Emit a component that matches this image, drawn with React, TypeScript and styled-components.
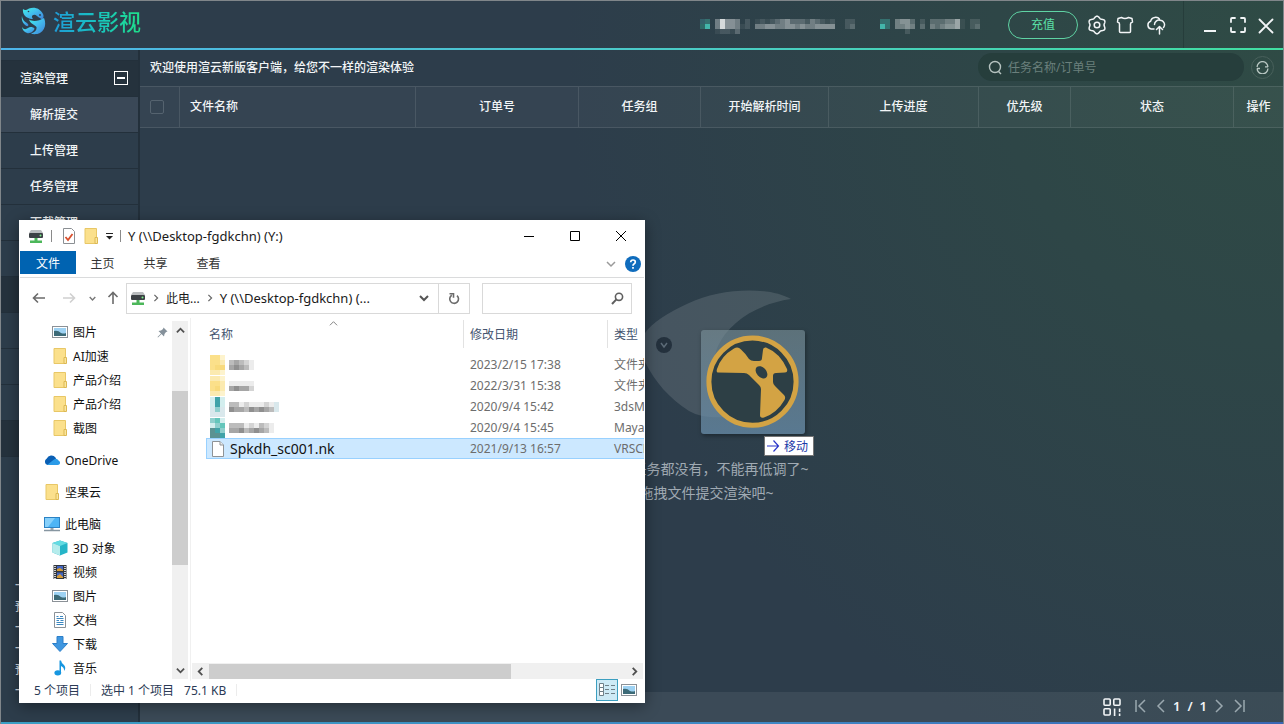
import React from 'react';
import styled, { createGlobalStyle, css } from 'styled-components';

const GlobalStyle = createGlobalStyle`
  *, *::before, *::after { box-sizing: border-box; }
  body { margin: 0; background: #2d3d4b; }
  body, button, input, table {
    font-family: "Noto Sans", "Noto Sans CJK SC", sans-serif;
    font-size: 12px;
  }
  button {
    padding: 0;
    border: 0;
    background: none;
    color: inherit;
    display: flex;
    align-items: center;
    justify-content: center;
  }
  svg { display: block; flex: none; }
`;

/* ---------- Render client ---------- */

const Client = styled.div`
  position: relative;
  min-height: 100vh;
  display: flex;
  flex-direction: column;
  overflow: hidden;
  border: 1px solid #80868a;
  border-bottom: 0;
  color: #f2f5f7;
  font-weight: 500;
  background:
    radial-gradient(ellipse 56% 105% at 100% 5%, #2f4b45 0%, #2e4647 40%, rgba(45, 61, 75, 0) 100%),
    #2d3d4b;
`;

const Header = styled.header`
  display: flex;
  align-items: center;
  height: 47px;
  padding: 0 7px 0 20px;
`;

const Brand = styled.div`
  display: flex;
  align-items: center;
  gap: 7px;
  margin-bottom: 8px;
`;

const BrandName = styled.span`
  font-size: 22px;
  line-height: 32px;
  font-weight: 500;
  color: transparent;
  background: linear-gradient(90deg, #1f9bd8, #18c3c0 50%, #1fe08a);
  background-clip: text;
`;

const Account = styled.div`
  display: flex;
  gap: 25px;
  margin: 4px 28px 0 auto;
`;

const Recharge = styled.button`
  width: 70px;
  height: 28px;
  margin-right: 9px;
  padding-bottom: 1px;
  border: 1px solid #5fd3a4;
  border-radius: 14px;
  color: #5be0a8;
`;

const IconButton = styled.button<{ $gap?: number }>`
  width: 20px;
  height: 20px;
  margin-right: ${(p) => p.$gap ?? 8}px;
`;

const WindowControls = styled.div`
  display: flex;
  align-items: center;
  gap: 8px;
  align-self: stretch;
  padding-left: 16px;
  border-left: 1px solid #263d3b;
  button { width: 20px; height: 20px; }
`;

const AccentLine = styled.div<{ $bottom?: boolean }>`
  height: 2px;
  flex: none;
  background: ${(p) =>
    p.$bottom
      ? 'linear-gradient(90deg, #3b9fc4, #3f87c4 60%, #3a66b4)'
      : 'linear-gradient(90deg, #4db5ea, #4bcac8 50%, #41dfa2)'};
`;

const Workspace = styled.div`
  flex: 1;
  display: flex;
`;

const Sidebar = styled.nav`
  flex: none;
  display: flex;
  flex-direction: column;
  width: 139px;
  padding-top: 10px;
  border-right: 2px solid #23303b;
`;

const navRow = css`
  display: flex;
  align-items: center;
  height: 36px;
  padding-bottom: 2px;
  border-top: 1px solid #23303b;
`;

const NavGroup = styled.div`
  ${navRow}
  justify-content: space-between;
  padding: 0 10px 1px 19px;
  background: #25323d;
`;

const NavItem = styled.a<{ $active?: boolean }>`
  ${navRow}
  padding-left: 29px;
  color: inherit;
  text-decoration: none;
  background: ${(p) => (p.$active ? '#3a4857' : 'transparent')};
`;

const Stats = styled.div`
  margin-top: auto;
  padding: 0 0 21px 14px;
  line-height: 21px;
  color: #d5dce2;
`;

const Main = styled.main`
  flex: 1;
  min-width: 0;
  display: flex;
  flex-direction: column;
`;

const Toolbar = styled.div`
  display: flex;
  align-items: center;
  justify-content: space-between;
  height: 36px;
  padding: 0 9px 2px 10px;
`;

const Tools = styled.div`
  display: flex;
  align-items: center;
  gap: 7px;
`;

const SearchBox = styled.label`
  display: flex;
  align-items: center;
  gap: 5px;
  width: 266px;
  height: 28px;
  padding-left: 10px;
  border-radius: 14px;
  background: #263e3c;
  input {
    flex: 1;
    min-width: 0;
    padding: 0;
    border: 0;
    outline: 0;
    background: none;
    color: #dfe8e5;
  }
  input::placeholder { color: #6b807c; opacity: 1; }
`;

const RefreshButton = styled.button`
  width: 23px;
  height: 23px;
  border: 1px solid #48605b;
  border-radius: 50%;
`;

const TaskTable = styled.table`
  width: 100%;
  table-layout: fixed;
  border-spacing: 0;
  th {
    height: 42px;
    padding: 0 0 2px;
    font-weight: 500;
    background: rgba(255, 255, 255, 0.04);
    border: solid rgba(255, 255, 255, 0.1);
    border-width: 1px 1px 1px 0;
  }
  th:last-child { border-right: 0; }
  th:nth-child(2) { text-align: left; padding-left: 10px; }
`;

const CheckBox = styled.input`
  appearance: none;
  display: block;
  width: 14px;
  height: 14px;
  margin: 2px 0 0 10px;
  border: 1px solid #55636f;
  border-radius: 2px;
`;

const Empty = styled.div`
  flex: 1;
  display: flex;
  flex-direction: column;
  align-items: center;
  padding: 162px 10px 0 0;
  color: #a0aab3;
  font-size: 14px;
  line-height: 24px;
  font-weight: 400;
  p { margin: 0; }
`;

const Footer = styled.footer`
  display: flex;
  align-items: center;
  justify-content: flex-end;
  height: 30px;
  padding-right: 38px;
  background: rgba(255, 255, 255, 0.07);
  button { height: 18px; }
`;

const Pager = styled.div`
  display: flex;
  align-items: center;
  gap: 7px;
  margin: 0 0 2px 14px;
`;

const PageCount = styled.div`
  display: flex;
  justify-content: space-between;
  width: 34px;
  font-size: 13px;
  font-weight: 600;
  line-height: 18px;
`;

/* ---------- File explorer window ---------- */

const Explorer = styled.section`
  position: absolute;
  left: 18px;
  top: 219px;
  width: 626px;
  height: 483px;
  display: flex;
  flex-direction: column;
  padding: 0 1px;
  background: #fff;
  color: #1a1a1a;
  font-weight: 400;
  box-shadow: 0 3px 14px rgba(0, 0, 0, 0.4);
`;

const TitleBar = styled.div`
  display: flex;
  align-items: center;
  height: 31px;
  padding-left: 8px;
`;

const WindowTitle = styled.span`
  font-size: 13px;
`;

const QuickAccess = styled.div`
  display: flex;
  align-items: center;
  gap: 7px;
  margin-right: 7px;
`;

const QuickActions = styled.div`
  display: flex;
  align-items: center;
  gap: 7px;
  padding-left: 3px;
`;

const Divider = styled.i<{ $color?: string }>`
  width: 1px;
  height: 12px;
  background: ${(p) => p.$color ?? '#8a8a8a'};
`;

const Caption = styled.div`
  display: flex;
  margin-left: auto;
  button { width: 46px; height: 30px; }
`;

const Ribbon = styled.div`
  display: flex;
  align-items: flex-start;
  height: 27px;
  border-bottom: 1px solid #dadbdc;
`;

const RibbonTab = styled.button<{ $primary?: boolean }>`
  width: ${(p) => (p.$primary ? 56 : 53)}px;
  height: 23px;
  color: ${(p) => (p.$primary ? '#fff' : '#333')};
  background: ${(p) => (p.$primary ? '#0063b1' : 'transparent')};
`;

const RibbonEnd = styled.div`
  display: flex;
  align-items: center;
  gap: 9px;
  height: 25px;
  margin-left: auto;
  padding-right: 3px;
`;

const AddressRow = styled.div`
  display: flex;
  align-items: center;
  height: 40px;
  padding: 0 12px 0 4px;
`;

const NavButton = styled.button<{ $width: number }>`
  width: ${(p) => p.$width}px;
  height: 30px;
`;

const AddressBox = styled.div`
  flex: 1;
  display: flex;
  align-items: center;
  gap: 6px;
  height: 31px;
  padding-left: 3px;
  border: 1px solid #d9d9d9;
  white-space: nowrap;
`;

const Crumb = styled.span<{ $large?: boolean }>`
  font-size: ${(p) => (p.$large ? 13 : 12)}px;
`;

const AddressRefresh = styled.button`
  align-self: stretch;
  width: 31px;
  border-left: 1px solid #d9d9d9;
`;

const AddressDrop = styled.button`
  width: 16px;
  height: 29px;
  margin-left: auto;
`;

const ExplorerSearch = styled.label`
  display: flex;
  align-items: center;
  width: 150px;
  height: 31px;
  margin-left: 12px;
  padding: 0 7px;
  border: 1px solid #d9d9d9;
  input { flex: 1; min-width: 0; border: 0; outline: 0; }
`;

const Panes = styled.div`
  flex: 1;
  min-height: 0;
  display: flex;
`;

const Tree = styled.ul`
  width: 152px;
  margin: 2px 0 0;
  padding: 0;
  list-style: none;
`;

const TreeItem = styled.li<{ $root?: boolean; $spaced?: boolean }>`
  display: flex;
  align-items: center;
  gap: 5px;
  height: 24px;
  margin-top: ${(p) => (p.$spaced ? 8 : 0)}px;
  padding: 0 4px 0 ${(p) => (p.$root ? 24 : 32)}px;
  color: #111;
  > span { flex: 1; }
`;

const VScroll = styled.div`
  display: flex;
  flex-direction: column;
  align-items: center;
  width: 16px;
  margin: 3px 2px 2px 0;
  background: #f0f0f0;
  button { width: 16px; height: 18px; }
`;

const VThumb = styled.div`
  width: 16px;
  height: 174px;
  margin: 52px 0 auto;
  background: #cdcdcd;
`;

const FilePane = styled.div`
  flex: 1;
  min-width: 0;
  display: flex;
  flex-direction: column;
  border-left: 1px solid #f0f0f0;
`;

const FileScroll = styled.div`
  flex: 1;
  overflow: hidden;
  padding-left: 15px;
`;

const FileTable = styled.table`
  width: 540px;
  table-layout: fixed;
  border-spacing: 0;
  th {
    position: relative;
    height: 31px;
    padding: 1px 0 0 6px;
    text-align: left;
    font-weight: 400;
    color: #44546f;
    background: linear-gradient(#e2e2e2, #e2e2e2) right 0 top 2px / 1px 28px no-repeat;
  }
  th:first-child { padding-left: 3px; }
  tbody::before { content: ""; display: block; height: 5px; }
`;

const SortMark = styled.span`
  position: absolute;
  left: 123px;
  top: 1px;
`;

const FileRow = styled.tr<{ $selected?: boolean }>`
  td {
    height: 21px;
    padding: 0 0 0 6px;
    line-height: 19px;
    white-space: nowrap;
    color: #6d6d6d;
    border: solid ${(p) => (p.$selected ? '#99d1ff' : 'transparent')};
    border-width: 1px 0;
    background: ${(p) => (p.$selected ? '#cce8ff' : 'transparent')};
  }
  td:first-child {
    padding-left: 3px;
    border-left-width: 1px;
    color: #111;
    font-size: 14px;
  }
`;

const FileName = styled.div`
  display: flex;
  align-items: center;
  gap: 4px;
  height: 19px;
`;

const HScroll = styled.div`
  display: flex;
  align-items: center;
  height: 16px;
  margin: 0 1px 2px;
  background: #f0f0f0;
  button { width: 17px; height: 16px; }
`;

const HThumb = styled.div`
  width: 302px;
  height: 15px;
  margin-right: auto;
  background: #cdcdcd;
`;

const StatusBar = styled.div`
  display: flex;
  align-items: center;
  height: 22px;
  padding: 0 4px 4px 14px;
  color: #2b3a55;
`;

const StatusText = styled.div`
  display: flex;
  align-items: center;
  gap: 10px;
`;

const Views = styled.div`
  display: flex;
  align-items: center;
  margin-left: auto;
`;

const ViewButton = styled.button<{ $on?: boolean }>`
  width: 22px;
  height: 22px;
  border: 1px solid ${(p) => (p.$on ? '#3d9fc0' : 'transparent')};
  background: ${(p) => (p.$on ? '#cdeaf6' : 'transparent')};
`;

/* ---------- Drag feedback ---------- */

const DragGhost = styled.div`
  position: absolute;
  left: 700px;
  top: 329px;
  width: 104px;
  height: 104px;
  border-radius: 3px;
  background: linear-gradient(rgba(124, 146, 154, 0.6), rgba(104, 140, 168, 0.75));
  box-shadow: 1px 2px 4px rgba(0, 0, 0, 0.35);
`;

const DropHint = styled.div`
  position: absolute;
  left: 763px;
  top: 435px;
  display: flex;
  align-items: center;
  gap: 4px;
  height: 20px;
  padding: 0 5px 0 1px;
  border: 1px solid #767676;
  background: #fff;
  color: #1b3aa8;
  font-weight: 400;
`;

/* ---------- Drawings ---------- */

const palette: Record<string, string> = {
  a: '#35706f', b: '#2f6a68', c: '#43b5aa', d: '#34606a',
  1: 'rgba(255,255,255,.06)', 2: 'rgba(255,255,255,.12)', 3: 'rgba(255,255,255,.22)',
  4: 'rgba(255,255,255,.32)', 5: 'rgba(255,255,255,.42)', 6: 'rgba(255,255,255,.52)',
  7: 'rgba(255,255,255,.64)', 8: 'rgba(255,255,255,.8)',
  y: '#fbe08a', Y: '#f8da7c', w: '#fdf3cd', W: '#fbeab0',
  t: '#40a3a8', T: '#5b9292', s: '#d3eeee', S: '#8fcfcd', u: '#63c6bb', v: '#7db3b3',
  k: '#8f8f8f', l: '#a6a6a6', m: '#bcbcbc', n: '#d4d4d4', o: '#ececec', p: '#d9e8ec',
};

function Mosaic({ rows }: { rows: string[] }) {
  const w = Math.max(...rows.map((r) => r.length)) * 5;
  const h = rows.length * 5;
  return (
    <svg width={w} height={h} shapeRendering="crispEdges" aria-hidden="true">
      {rows.flatMap((row, y) =>
        [...row].map((c, x) =>
          palette[c] ? (
            <rect key={`${x}-${y}`} x={x * 5} y={y * 5} width="5" height="5" fill={palette[c]} />
          ) : null,
        ),
      )}
    </svg>
  );
}

const line = { fill: 'none', stroke: 'currentColor', strokeWidth: 1.5, strokeLinecap: 'round', strokeLinejoin: 'round' } as const;

const Logo = () => (
  <svg width="25" height="28" viewBox="0 0 25 28">
    <defs>
      <linearGradient id="logo" x1="0" y1="0" x2="1" y2="1">
        <stop offset="0" stopColor="#3ff0e4" />
        <stop offset=".45" stopColor="#42bfee" />
        <stop offset="1" stopColor="#3f7fd6" />
      </linearGradient>
    </defs>
    <g fill="url(#logo)">
      <path d="M2 2C4 4 5 3 8 1.500C13-.5 19 1 22 7C23 9 22.500 11 21 13C20 11 18 11 16 9C13 6 9 9 12 12C7 12 1 9 2 2Z" />
      <path d="M23 11C25.500 17 24 23 19 26C16 27.500 12 27.500 10 26.500C14 25 16 23 15.500 20C13 17.500 9 16.500 8 12.500C12 15 18 14 23 11Z" />
      <path d="M1 20C3 23 5 22.500 7 21C9 19.500 12 20 13.500 21.500C13 24.500 9 27 6 26C3 25 1.500 23 1 20Z" />
      <path d="M1 9C1.500 14 5 15 7 17C8 18.500 7 19.500 5.500 19C2.500 17.500 0 13 1 9Z" />
    </g>
    <circle cx="19" cy="8" r=".9" fill="#2d3d4b" />
    <circle cx="7.500" cy="4.500" r=".8" fill="#2d3d4b" />
  </svg>
);

/* Six-lobed outline whose radius follows a cosine. */
const gearOutline = Array.from({ length: 72 }, (_, i) => {
  const a = (i * Math.PI) / 36;
  const r = 7.9 - 0.9 * Math.cos(6 * a);
  return `${(10 + r * Math.cos(a)).toFixed(2)},${(10 + r * Math.sin(a)).toFixed(2)}`;
}).join(' ');

const Gear = () => (
  <svg width="20" height="20" viewBox="0 0 20 20" {...line}>
    <polygon points={gearOutline} />
    <circle cx="10" cy="10" r="2.800" />
  </svg>
);

const Shirt = () => (
  <svg width="20" height="20" viewBox="0 0 20 20" {...line}>
    <path d="M6.500 2.500Q10 4.500 13.500 2.500L17 3.500L17.500 7Q15.500 7.500 15.500 9V16.500Q15.500 17.500 14.500 17.500H5.500Q4.500 17.500 4.500 16.500V9Q4.500 7.500 2.500 7L3 3.500Z" />
  </svg>
);

const CloudUp = () => (
  <svg width="20" height="20" viewBox="0 0 20 20" {...line}>
    <path d="M8 14H5.200A4 4 0 0 1 4.600 6.300A5 5 0 0 1 14 5.200A4.500 4.500 0 0 1 17.500 12.500M8.500 9.500A4.500 4.500 0 0 1 14 5.200M13.500 19V12M10.500 14.500L13.500 11.500L16.500 14.500" />
  </svg>
);

const Minus = () => (
  <svg width="20" height="20" viewBox="0 0 20 20"><path d="M4 16H16" stroke="#f2f5f7" strokeWidth="2" /></svg>
);

const Corners = () => (
  <svg width="20" height="20" viewBox="0 0 20 20" {...line} strokeWidth={1.800}>
    <path d="M3 7V4Q3 3 4 3H7M13 3H16Q17 3 17 4V7M17 13V16Q17 17 16 17H13M7 17H4Q3 17 3 16V13" />
  </svg>
);

const Cross = () => (
  <svg width="20" height="20" viewBox="0 0 20 20" {...line} strokeWidth={1.800}>
    <path d="M3.500 4.500L16.500 17.500M16.500 4.500L3.500 17.500" />
  </svg>
);

const Chevron = ({ dir, size = 10, color = 'currentColor', width = 1.5 }: { dir: 'up' | 'down' | 'left' | 'right'; size?: number; color?: string; width?: number }) => {
  const d = {
    up: 'M1 7L5 3L9 7',
    down: 'M1 3L5 7L9 3',
    left: 'M7 1L3 5L7 9',
    right: 'M3 1L7 5L3 9',
  }[dir];
  return (
    <svg width={size} height={size} viewBox="0 0 10 10" fill="none" stroke={color} strokeWidth={width}>
      <path d={d} />
    </svg>
  );
};

const PageArrow = ({ dir, end }: { dir: 'left' | 'right'; end?: boolean }) => (
  <svg width="12" height="14" viewBox="0 0 12 14" fill="none" stroke="#9aa8af" strokeWidth="1.5">
    <path d={dir === 'left' ? 'M10 1L4 7L10 13' : 'M2 1L8 7L2 13'} />
    {end && <path d={dir === 'left' ? 'M1 1V13' : 'M11 1V13'} />}
  </svg>
);

const Blocks = () => (
  <svg width="18" height="18" viewBox="0 0 18 18" fill="none" stroke="#f2f5f7" strokeWidth="1.600">
    <rect x="1" y="1" width="6.200" height="6.200" rx="1" />
    <rect x="10.800" y="1" width="6.200" height="6.200" rx="1" />
    <rect x="1" y="10.800" width="6.200" height="6.200" rx="1" />
    <path d="M11.600 10.500V18M16.600 10.500V14M16.600 15.500V18" />
  </svg>
);

const Lens = () => (
  <svg width="15" height="15" viewBox="0 0 15 15" fill="none" stroke="#b6c3c0" strokeWidth="1.400">
    <circle cx="7" cy="7" r="5.500" />
    <path d="M10.500 11.500L13 14" />
  </svg>
);

const Sync = () => (
  <svg width="13" height="13" viewBox="0 0 13 13" fill="none" stroke="#b9c7c3" strokeWidth="1.300">
    <path d="M1.100 6A5.400 5.400 0 0 1 11.900 6M11.900 7.500A5.400 5.400 0 0 1 1.100 7.500M9 5.800H12M4 7.500H1" />
  </svg>
);

const Collapse = () => (
  <svg width="14" height="14" viewBox="0 0 14 14" fill="none" stroke="#fff">
    <rect x=".5" y=".5" width="13" height="13" />
    <path d="M3 7H11" strokeWidth="2" />
  </svg>
);

const Whale = () => (
  <svg width="200" height="167" viewBox="0 0 200 167">
    <path d="M184 9C162-4 112-2 82 13C60 23 45 33 38 43C30 52 30 60 38 72C48 92 62 108 82 121C92 127 106 128 122 127C106 104 103 74 111 56C122 32 150 14 184 9Z" fill="#fff" opacity=".12" />
    <circle cx="57" cy="55" r="8" fill="#24313d" />
    <path d="M54 53L57 57L60 53" fill="none" stroke="#5c6b78" strokeWidth="1.500" />
  </svg>
);

const Nuke = () => (
  <svg width="104" height="104" viewBox="0 0 104 104">
    <circle cx="51.500" cy="51.700" r="43.600" fill="#2d3f45" stroke="#d3a344" strokeWidth="5" />
    <path d="M17 42.500Q15 42.500 16 39Q20 26 33 18.500Q37 16 40 19.500Q44 23 48 29Q50 31 53 31H58Q61 31 61 28L62 20Q62 17 65 17.500Q79 23 86 39Q87 42.500 84 42.500L75 43Q72 43 72 46V52Q72 54 74 56L83 65Q85 67 83.500 70Q76 83 63 87.500Q59 88.500 59 85L60 59Q60 57 58 55L48 45Q46 43 43 43Z" fill="#d3a344" />
    <ellipse cx="60.500" cy="42.300" rx="4.800" ry="7" transform="rotate(-42 60.500 42.300)" fill="#2d3f45" />
  </svg>
);

const Folder = () => (
  <svg width="16" height="16" viewBox="0 0 16 16">
    <path d="M2 .5H13.500V15.500H2Z" fill="#fbe08c" stroke="#e8c766" />
    <path d="M12 9.500H14.500V15.500H12Z" fill="#fbe59b" stroke="#dcb955" />
  </svg>
);

const Drive = () => (
  <svg width="16" height="16" viewBox="0 0 16 16">
    <path d="M3 2H13L15 5H1Z" fill="#b9bcbe" />
    <rect x="1" y="5" width="14" height="5" rx="1" fill="#3c4145" />
    <circle cx="12.500" cy="7.500" r="1" fill="#7cf08a" />
    <path d="M6.500 10H9.500V12.500H14V15H2V12.500H6.500Z" fill="#4cb75a" />
  </svg>
);

const CheckPage = () => (
  <svg width="14" height="16" viewBox="0 0 14 16">
    <path d="M1.500 .5H9.500L12.500 3.500V15.500H1.500Z" fill="#fff" stroke="#8b8f93" />
    <path d="M3.500 9L6 12L10.500 6" fill="none" stroke="#d9502e" strokeWidth="1.800" />
  </svg>
);

const Page = () => (
  <svg width="16" height="18" viewBox="0 0 16 18">
    <path d="M2.500 1.500H10L13.500 5V16.500H2.500Z" fill="#fff" stroke="#8f9396" />
    <path d="M10 1.500V5H13.500" fill="#eee" stroke="#8f9396" />
  </svg>
);

const Picture = () => (
  <svg width="16" height="16" viewBox="0 0 16 16">
    <rect x=".5" y="2.500" width="15" height="11" fill="#fff" stroke="#8b9197" />
    <rect x="2" y="4" width="12" height="8" fill="#9ed2f3" />
    <path d="M2 7Q6 6 9 9Q12 10 14 9V12H2Z" fill="#3c6a77" />
  </svg>
);

const OneDrive = () => (
  <svg width="16" height="16" viewBox="0 0 16 16">
    <path d="M3.500 13A3.500 3.500 0 0 1 2.800 6.500A5 5 0 0 1 11.500 5.500L14 12Z" fill="#0a5fb4" />
    <path d="M3 13L10 7.500A3.200 3.200 0 0 1 14.500 8.500Q17 10 15.500 12.200Q15 13 13.500 13Z" fill="#2b9be8" />
  </svg>
);

const Computer = () => (
  <svg width="16" height="16" viewBox="0 0 16 16">
    <rect x=".5" y="1.500" width="15" height="10" fill="#4db4f5" stroke="#2b82c4" />
    <path d="M1 2H11L4 11H1Z" fill="#86d0fb" />
    <path d="M6.500 12H9.500V14H6.500Z" fill="#9aa5ad" />
    <path d="M0 14.500H16" stroke="#8796a1" strokeWidth="1.500" />
  </svg>
);

const Cube = () => (
  <svg width="16" height="16" viewBox="0 0 16 16">
    <path d="M8 .5L15.500 3V12.500L8 15.500L.5 12.500V3Z" fill="#25b5c8" />
    <path d="M8 .5L15.500 3L8 6L.5 3Z" fill="#63dbe2" />
    <path d="M.5 3L8 6V15.500L.5 12.500Z" fill="#b5ecec" />
  </svg>
);

const Film = () => (
  <svg width="16" height="16" viewBox="0 0 16 16">
    <rect x="1.500" y="1" width="13" height="14" fill="#33373d" />
    <path d="M3 2V15M13 2V15" stroke="#fff" strokeWidth="1.500" strokeDasharray="1 1" />
    <path d="M5 2H11V7H5ZM5 8.500H11V14H5Z" fill="#4165c2" />
    <path d="M5 5L8 4L11 6V7H5ZM5 12L8 10L11 13V14H5Z" fill="#d59b35" />
  </svg>
);

const Doc = () => (
  <svg width="16" height="16" viewBox="0 0 16 16">
    <path d="M2.500 .5H10.500L13.500 3.500V15.500H2.500Z" fill="#fff" stroke="#8b9197" />
    <path d="M8 4.500H11M4.500 6.500H11.500M4.500 8.500H7M8.500 8.500H11.500M4.500 10.500H11.500M4.500 12.500H11.500M4.500 4.500H6.500" stroke="#3b87c0" />
  </svg>
);

const Download = () => (
  <svg width="16" height="16" viewBox="0 0 16 16">
    <path d="M5 .5H11V7.500H15.500L8 15.500L.5 7.500H5Z" fill="#3f97e0" stroke="#2c7fc9" />
  </svg>
);

const Note = () => (
  <svg width="16" height="16" viewBox="0 0 16 16">
    <path d="M7.500 .5H9Q9.500 3.500 12 5Q14.500 8 12 11Q12.500 7.500 9 6V12.500H7.500Z" fill="#1696e0" />
    <ellipse cx="5.800" cy="12.800" rx="3.400" ry="2.600" fill="#1696e0" />
  </svg>
);

const Pin = () => (
  <svg width="11" height="11" viewBox="0 0 11 11">
    <path d="M6.500 .5L10.500 4.500L9 5L7.500 7L7 9.500L4.500 7L1 10.500L.5 10L4 6.500L1.500 4L4 3.500L6 2Z" fill="#85919b" />
  </svg>
);

const Arrow = ({ dir, color }: { dir: 'left' | 'right' | 'up'; color: string }) => (
  <svg width="14" height="14" viewBox="0 0 14 14" fill="none" stroke={color} strokeWidth="1.600">
    <path d={{ left: 'M13 7H1.500M6 2.500L1.500 7L6 11.500', right: 'M1 7H12.500M8 2.500L12.500 7L8 11.500', up: 'M7 13V1.500M2.500 6L7 1.500L11.500 6' }[dir]} />
  </svg>
);

const HintArrow = () => (
  <svg width="14" height="14" viewBox="0 0 14 14" fill="none" stroke="#2a35c9" strokeWidth="1.200">
    <path d="M1 7H12.500M7.500 1.500L12.500 7L7.500 12.500" />
  </svg>
);

const CaptionIcon = ({ d }: { d: string }) => (
  <svg width="12" height="12" viewBox="0 0 12 12" fill="none" stroke="#000"><path d={d} /></svg>
);

const Reload = () => (
  <svg width="12" height="13" viewBox="0 0 12 13" fill="none" stroke="#6b6b6b" strokeWidth="1.600">
    <path d="M9 3.600A4.400 4.400 0 1 1 3.800 3.200M1.500 1.800H5.500V5.800" />
  </svg>
);

const SearchGlass = () => (
  <svg width="13" height="13" viewBox="0 0 13 13" fill="none" stroke="#5f5f5f" strokeWidth="1.600">
    <circle cx="8" cy="4.800" r="3.600" />
    <path d="M5.400 7.400L1 12" strokeWidth="2" />
  </svg>
);

const Help = () => (
  <svg width="16" height="16" viewBox="0 0 16 16">
    <circle cx="8" cy="8" r="8" fill="#0f6cbd" />
    <path d="M5.700 6.200Q5.800 4 8 4Q10.300 4 10.300 6Q10.300 7.300 9 8Q8 8.600 8 9.700M8 11V12.700" fill="none" stroke="#fff" strokeWidth="1.700" />
  </svg>
);

const DetailsIcon = () => (
  <svg width="16" height="14" viewBox="0 0 16 14" fill="none" stroke="#6e7f88">
    <path d="M.5 .5H4.500V4.500H.5ZM.5 4.500H4.500V8.500H.5ZM.5 8.500H4.500V12.500H.5Z" fill="#fff" />
    <path d="M6 2.500H10M12 2.500H16M6 6.500H10M12 6.500H16M6 10.500H10M12 10.500H16" />
  </svg>
);

/* ---------- Data ---------- */

const menu = ['解析提交', '上传管理', '任务管理', '下载管理'];

const columns: [string, number][] = [
  ['文件名称', 236], ['订单号', 163], ['任务组', 122], ['开始解析时间', 128],
  ['上传进度', 150], ['优先级', 92], ['状态', 163], ['操作', 49],
];

const tree: { name: string; icon: React.ReactNode; root?: boolean; spaced?: boolean; pinned?: boolean }[] = [
  { name: '图片', icon: <Picture />, pinned: true },
  { name: 'AI加速', icon: <Folder /> },
  { name: '产品介绍', icon: <Folder /> },
  { name: '产品介绍', icon: <Folder /> },
  { name: '截图', icon: <Folder /> },
  { name: 'OneDrive', icon: <OneDrive />, root: true, spaced: true },
  { name: '坚果云', icon: <Folder />, root: true, spaced: true },
  { name: '此电脑', icon: <Computer />, root: true, spaced: true },
  { name: '3D 对象', icon: <Cube /> },
  { name: '视频', icon: <Film /> },
  { name: '图片', icon: <Picture /> },
  { name: '文档', icon: <Doc /> },
  { name: '下载', icon: <Download /> },
  { name: '音乐', icon: <Note /> },
];

const files: { name?: string; icon: React.ReactNode; blurred?: string[]; date: string; type: string }[] = [
  { icon: <Mosaic rows={['yyw', 'yyW', 'yYY', 'WWw']} />, blurred: ['mlmno', 'lklmo'], date: '2023/2/15 17:38', type: '文件夹' },
  { icon: <Mosaic rows={['WWw', 'yyW', 'yYW', 'WWw']} />, blurred: ['ooooo', 'lklln'], date: '2022/3/31 15:38', type: '文件夹' },
  { icon: <Mosaic rows={['sts', 'sts', 'pSp', 'ppp']} />, blurred: ['mmonooonop', 'kllmklklmp'], date: '2020/9/4 15:42', type: '3dsMax' },
  { icon: <Mosaic rows={['Sus', 'sSu', 'TtS', 'TTt']} />, blurred: ['mmmonomno', 'llkmlklmo'], date: '2020/9/4 15:45', type: 'Maya' },
  { name: 'Spkdh_sc001.nk', icon: <Page />, date: '2021/9/13 16:57', type: 'VRSCENE' },
];

const accountId = [
  'da.48554.2.1212345333243212..22',
  'bc.48554123.455445545445555..23'.replace('123.4', '12.44'),
  '...12213',
];
const balance = ['aa.4553.2.3334461.22', 'ca.4454.3.4345561.23', '.....2'];

function ExplorerWindow() {
  return (
    <Explorer>
      <TitleBar>
        <QuickAccess>
          <Drive />
          <Divider />
          <QuickActions>
            <CheckPage />
            <Folder />
            <svg width="7" height="8" viewBox="0 0 7 8"><path d="M0 1.500H7" stroke="#222" /><path d="M0 4H7L3.500 7.500Z" fill="#222" /></svg>
          </QuickActions>
          <Divider />
        </QuickAccess>
        <WindowTitle>Y (\\Desktop-fgdkchn) (Y:)</WindowTitle>
        <Caption>
          <button aria-label="最小化"><CaptionIcon d="M1 6.500H11" /></button>
          <button aria-label="最大化"><CaptionIcon d="M1.500 1.500H10.500V10.500H1.500Z" /></button>
          <button aria-label="关闭"><CaptionIcon d="M1 1L11 11M11 1L1 11" /></button>
        </Caption>
      </TitleBar>
      <Ribbon>
        <RibbonTab $primary>文件</RibbonTab>
        <RibbonTab>主页</RibbonTab>
        <RibbonTab>共享</RibbonTab>
        <RibbonTab>查看</RibbonTab>
        <RibbonEnd>
          <button aria-label="展开功能区"><Chevron dir="down" color="#9a9a9a" /></button>
          <button aria-label="帮助"><Help /></button>
        </RibbonEnd>
      </Ribbon>
      <AddressRow>
        <NavButton $width={30} aria-label="后退"><Arrow dir="left" color="#6b6b6b" /></NavButton>
        <NavButton $width={30} aria-label="前进"><Arrow dir="right" color="#d0d0d0" /></NavButton>
        <NavButton $width={16} aria-label="最近"><Chevron dir="down" size={7} color="#777" width={2} /></NavButton>
        <NavButton $width={26} aria-label="向上"><Arrow dir="up" color="#6b6b6b" /></NavButton>
        <AddressBox>
          <Drive />
          <Chevron dir="right" size={8} color="#666" />
          <Crumb>此电...</Crumb>
          <Chevron dir="right" size={8} color="#666" />
          <Crumb $large>Y (\\Desktop-fgdkchn) (...</Crumb>
          <AddressDrop aria-label="地址历史"><Chevron dir="down" color="#555" width={2} /></AddressDrop>
          <AddressRefresh aria-label="刷新"><Reload /></AddressRefresh>
        </AddressBox>
        <ExplorerSearch>
          <input type="text" aria-label="搜索" />
          <SearchGlass />
        </ExplorerSearch>
      </AddressRow>
      <Panes>
        <Tree>
          {tree.map((t, i) => (
            <TreeItem key={i} $root={t.root} $spaced={t.spaced}>
              {t.icon}
              <span>{t.name}</span>
              {t.pinned && <Pin />}
            </TreeItem>
          ))}
        </Tree>
        <VScroll>
          <button aria-label="向上滚动"><Chevron dir="up" size={9} color="#505050" width={2} /></button>
          <VThumb />
          <button aria-label="向下滚动"><Chevron dir="down" size={9} color="#505050" width={2} /></button>
        </VScroll>
        <FilePane>
          <FileScroll>
            <FileTable>
              <colgroup>
                <col width="258" />
                <col width="144" />
                <col />
              </colgroup>
              <thead>
                <tr>
                  <th>名称<SortMark><Chevron dir="up" size={9} color="#777" width={1} /></SortMark></th>
                  <th>修改日期</th>
                  <th>类型</th>
                </tr>
              </thead>
              <tbody>
                {files.map((f) => (
                  <FileRow key={f.date} $selected={!!f.name}>
                    <td>
                      <FileName>
                        {f.icon}
                        {f.name ?? <Mosaic rows={f.blurred ?? []} />}
                      </FileName>
                    </td>
                    <td>{f.date}</td>
                    <td>{f.type}</td>
                  </FileRow>
                ))}
              </tbody>
            </FileTable>
          </FileScroll>
          <HScroll>
            <button aria-label="向左滚动"><Chevron dir="left" size={9} color="#505050" width={2} /></button>
            <HThumb />
            <button aria-label="向右滚动"><Chevron dir="right" size={9} color="#505050" width={2} /></button>
          </HScroll>
        </FilePane>
      </Panes>
      <StatusBar>
        <StatusText>
          <span>5 个项目</span>
          <Divider $color="#ececec" />
          <span>选中 1 个项目</span>
          <span>75.1 KB</span>
          <Divider $color="#ececec" />
        </StatusText>
        <Views>
          <ViewButton $on aria-label="详细信息"><DetailsIcon /></ViewButton>
          <ViewButton aria-label="大图标"><Picture /></ViewButton>
        </Views>
      </StatusBar>
    </Explorer>
  );
}

export default function App() {
  return (
    <>
      <GlobalStyle />
      <Client>
        <Header>
          <Brand>
            <Logo />
            <BrandName>渲云影视</BrandName>
          </Brand>
          <Account>
            <Mosaic rows={accountId} />
            <Mosaic rows={balance} />
          </Account>
          <Recharge>充值</Recharge>
          <IconButton aria-label="设置"><Gear /></IconButton>
          <IconButton $gap={11} aria-label="皮肤"><Shirt /></IconButton>
          <IconButton $gap={17} aria-label="上传"><CloudUp /></IconButton>
          <WindowControls>
            <button aria-label="最小化"><Minus /></button>
            <button aria-label="全屏"><Corners /></button>
            <button aria-label="关闭"><Cross /></button>
          </WindowControls>
        </Header>
        <AccentLine />
        <Workspace>
          <Sidebar>
            <NavGroup>渲染管理<Collapse /></NavGroup>
            {menu.map((name, i) => (
              <NavItem key={name} href="#" $active={i === 0}>{name}</NavItem>
            ))}
            <NavItem as="div" />
            <NavGroup />
            <NavItem as="div" />
            <NavItem as="div" />
            <NavItem as="div" />
            <NavGroup />
            <NavItem as="div" />
            <Stats>
              <div>一</div>
              <div>预</div>
              <div>一</div>
              <div>一</div>
              <div>预</div>
              <div>一</div>
            </Stats>
          </Sidebar>
          <Main>
            <Toolbar>
              <span>欢迎使用渲云新版客户端，给您不一样的渲染体验</span>
              <Tools>
                <SearchBox>
                  <Lens />
                  <input type="text" placeholder="任务名称/订单号" aria-label="搜索任务" />
                </SearchBox>
                <RefreshButton aria-label="刷新"><Sync /></RefreshButton>
              </Tools>
            </Toolbar>
            <TaskTable>
              <colgroup>
                <col width="40" />
                {columns.map(([name, width]) => <col key={name} width={width} />)}
              </colgroup>
              <thead>
                <tr>
                  <th><CheckBox type="checkbox" aria-label="全选" /></th>
                  {columns.map(([name]) => <th key={name}>{name}</th>)}
                </tr>
              </thead>
            </TaskTable>
            <Empty>
              <Whale />
              <p>一个任务都没有，不能再低调了~</p>
              <p>拖拽文件提交渲染吧~</p>
            </Empty>
            <Footer>
              <button aria-label="视图"><Blocks /></button>
              <Pager>
                <button aria-label="首页"><PageArrow dir="left" end /></button>
                <button aria-label="上一页"><PageArrow dir="left" /></button>
                <PageCount><span>1</span><span>/</span><span>1</span></PageCount>
                <button aria-label="下一页"><PageArrow dir="right" /></button>
                <button aria-label="末页"><PageArrow dir="right" end /></button>
              </Pager>
            </Footer>
          </Main>
        </Workspace>
        <AccentLine $bottom />
        <ExplorerWindow />
        <DragGhost><Nuke /></DragGhost>
        <DropHint><HintArrow />移动</DropHint>
      </Client>
    </>
  );
}
